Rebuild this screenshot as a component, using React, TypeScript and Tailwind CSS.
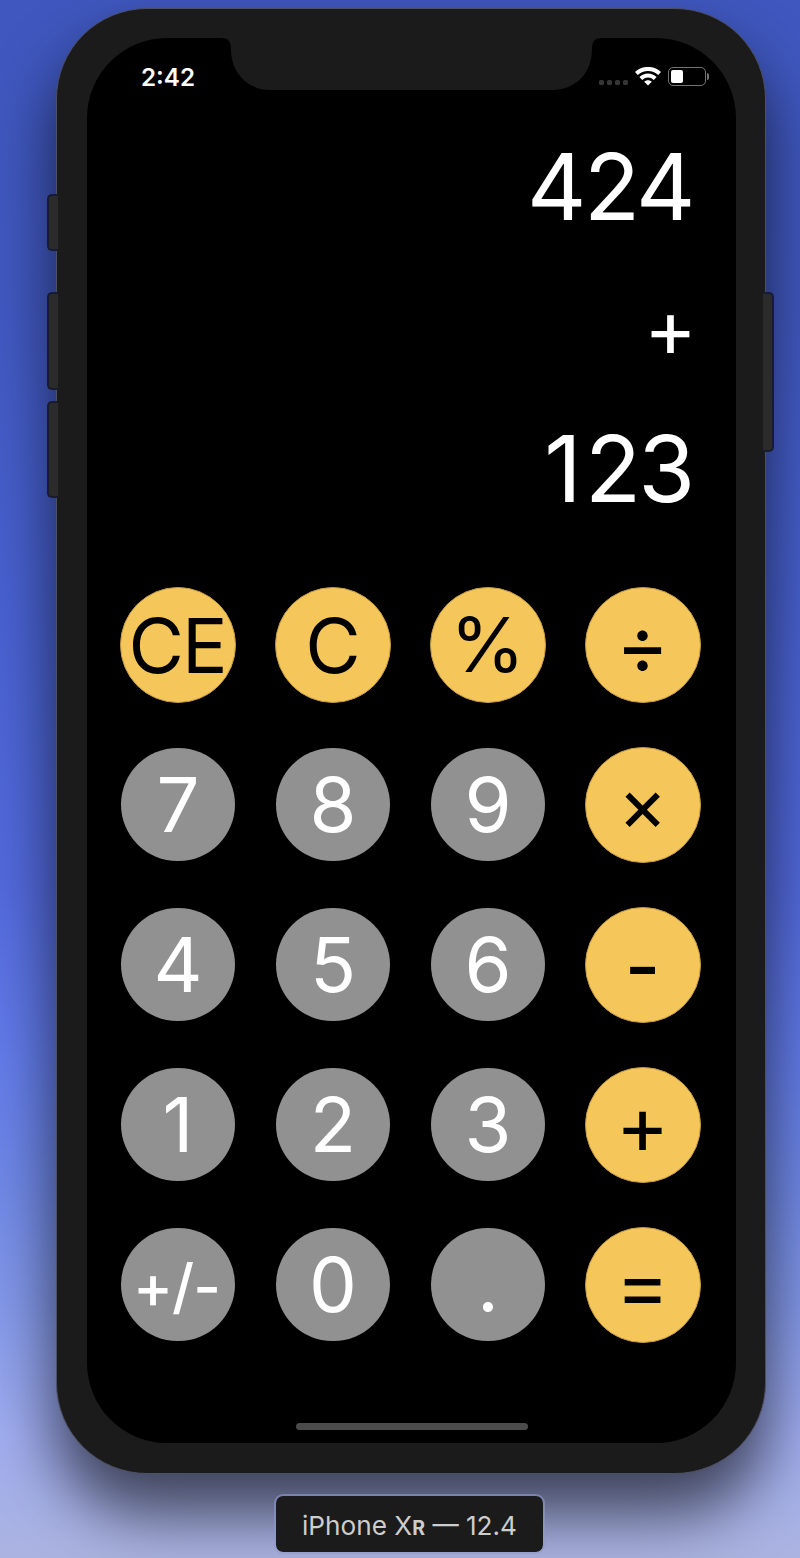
import React from "react";

type Tone = "amber" | "grey";

interface CalcKeyProps {
  label: string;
  tone: Tone;
  text?: string;
}

const OPERATOR = "text-[81px]";

const keys: CalcKeyProps[] = [
  { label: "CE", tone: "amber", text: "text-[76px] tracking-[-2px] mr-px pb-px" },
  { label: "C", tone: "amber", text: "text-[76px] pl-px pb-px" },
  { label: "%", tone: "amber", text: "text-[76px] pb-[2px]" },
  { label: "÷", tone: "amber", text: OPERATOR },
  { label: "7", tone: "grey" },
  { label: "8", tone: "grey" },
  { label: "9", tone: "grey" },
  { label: "×", tone: "amber", text: "text-[75px] pb-[3px]" },
  { label: "4", tone: "grey" },
  { label: "5", tone: "grey" },
  { label: "6", tone: "grey" },
  { label: "-", tone: "amber", text: "text-[77px] font-medium pt-[3px]" },
  { label: "1", tone: "grey" },
  { label: "2", tone: "grey" },
  { label: "3", tone: "grey" },
  { label: "+", tone: "amber", text: OPERATOR },
  { label: "+/-", tone: "grey", text: "text-[60px] font-medium tracking-[-1px] pt-[3px] mr-[3px]" },
  { label: "0", tone: "grey" },
  { label: ".", tone: "grey" },
  { label: "=", tone: "amber", text: OPERATOR },
];

function CalcKey({ label, tone, text = "text-[76px] pb-[2px]" }: CalcKeyProps) {
  const toneClass =
    tone === "amber"
      ? "h-[116px] w-[116px] border border-[#c39b45] bg-[#f5c75a] text-black"
      : "mb-px ml-px h-[113.5px] w-[113.5px] bg-[#919191] text-white";
  return (
    <div className="flex h-[160px] w-[155px] items-center justify-center">
      <button className={`flex items-center justify-center rounded-full ${toneClass}`}>
        <span className={`whitespace-nowrap leading-none ${text}`}>{label}</span>
      </button>
    </div>
  );
}

function Notch() {
  return (
    <svg className="absolute left-[134px] top-0" width="381" height="52" viewBox="0 0 381 52">
      <path d="M0 0 C7 0 10 3 10 11 C10 35 27 52 49 52 H331 C355 52 371 35 371 11 C371 3 374 0 381 0 Z" fill="#1b1b1b" />
    </svg>
  );
}

function WifiIcon() {
  return (
    <svg width="26" height="19" viewBox="0 0 26 19" fill="none" stroke="#fff" strokeWidth="4.1">
      <path d="M1.4 6.6 C8 0.4 18 0.4 24.6 6.6" />
      <path d="M5.8 11.5 C10 7.5 16 7.5 20.2 11.5" />
      <path d="M13 18.6 L9.2 14.8 C11.2 12.8 14.8 12.8 16.8 14.8 Z" fill="#fff" stroke="none" />
    </svg>
  );
}

function StatusBar() {
  return (
    <div className="flex h-[77px] items-center justify-between pl-[54px] pr-[27px]">
      <span className="pt-[3px] text-[24.2px] font-semibold leading-none">2:42</span>
      <div className="flex items-center">
        <div className="mr-[7px] flex gap-[2.6px] pt-[12px]">
          {[0, 1, 2, 3].map((dot) => (
            <span key={dot} className="h-[5.5px] w-[5.3px] rounded-[1.5px] bg-[#353535]" />
          ))}
        </div>
        <WifiIcon />
        <div className="ml-[7px] flex h-[19px] w-[37.5px] items-center rounded-[5px] border-[1.3px] border-[#747474] pl-[1.7px]">
          <span className="h-[13.5px] w-[12px] rounded-[2px] bg-white" />
        </div>
        <span className="ml-[1px] h-[7px] w-[2.5px] rounded-r-full bg-[#747474]" />
      </div>
    </div>
  );
}

function SideButton({ place }: { place: string }) {
  return <div className={`absolute border-2 border-[#181c31] bg-[#2b2b2b] ${place}`} />;
}

export default function App() {
  return (
    <div className="flex h-[1558px] w-[800px] flex-col overflow-hidden bg-[linear-gradient(180deg,#3f57be_0%,#4159c2_20%,#4861d0_38%,#536ade_57%,#637cea_68%,#7089e8_76%,#8499ea_84%,#a0adf0_92%,#abb4e0_100%)] pl-[56px] pt-[8px] font-['Inter',sans-serif]">
      <div className="relative h-[1466px] w-[710px] shrink-0 rounded-[91px] border border-[#4c5064] bg-[#1b1b1b] pl-[30px] pt-[29px] shadow-[0_38px_62px_2px_rgba(0,0,0,0.62)]">
        <SideButton place="left-[-10px] top-[185px] h-[57px] w-[11px] rounded-l-[5px] border-r-0" />
        <SideButton place="left-[-10px] top-[283px] h-[98px] w-[11px] rounded-l-[5px] border-r-0" />
        <SideButton place="left-[-10px] top-[392px] h-[97px] w-[11px] rounded-l-[5px] border-r-0" />
        <SideButton place="right-[-9px] top-[283px] h-[160px] w-[11px] rounded-r-[5px] border-l-0" />

        <div className="relative flex h-[1405px] w-[649px] flex-col overflow-hidden rounded-[80px] bg-black text-white">
          <Notch />
          <StatusBar />
          <div className="flex h-[450px] flex-col items-end pr-[43px] pt-px leading-none">
            <div className="flex h-[141px] items-center text-[92px] tracking-[-2.5px]">424</div>
            <div className="-mr-[4px] flex h-[141px] items-center text-[80px]">+</div>
            <div className="mr-px flex h-[141px] items-center text-[92px] tracking-[-3px]">
              <span className="tracking-[3.5px]">1</span>23
            </div>
          </div>
          <div className="ml-[13px] grid w-[620px] grid-cols-4">
            {keys.map((k) => (
              <CalcKey key={k.label} {...k} />
            ))}
          </div>
          <div className="ml-[209px] mt-[57.5px] h-[7.5px] w-[231.5px] rounded-full bg-[#4b4b4b]" />
        </div>
      </div>

      <div className="relative ml-[218px] mt-[20px] flex h-[60px] w-[271px] shrink-0 items-center justify-center rounded-[9px] border-2 border-[#8f9acb]/60 bg-[#1b1b1b] bg-clip-padding pt-[5px] text-[26.2px] leading-none text-[#cdcdcd]">
        <span className="whitespace-nowrap">
          iPhone X<span className="text-[19.5px] font-bold">R</span> — 12.4
        </span>
      </div>
    </div>
  );
}
